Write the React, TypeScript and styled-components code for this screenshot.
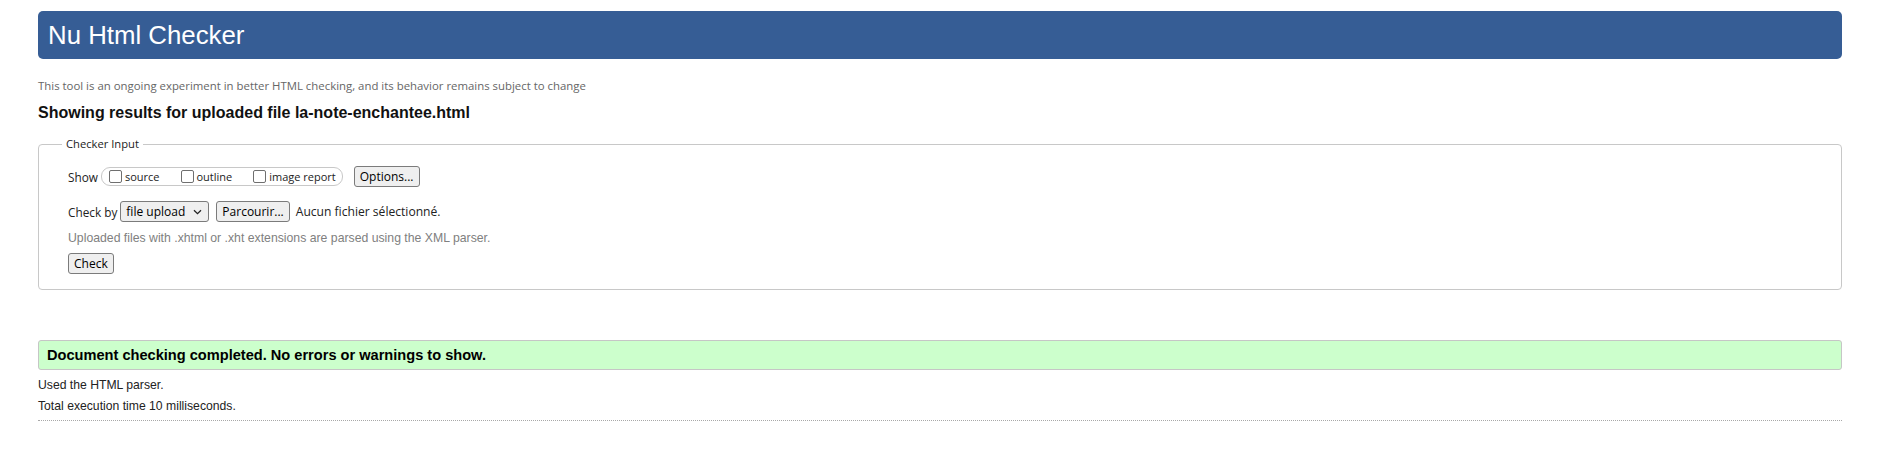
import React from "react";
import styled, { createGlobalStyle } from "styled-components";

const GlobalStyle = createGlobalStyle`
  body {
    margin: 0;
    background: #fff;
    color: #222;
    font-family: "Liberation Sans", Arial, sans-serif;
  }
`;

const uiFont = `"Open Sans", "Noto Sans", sans-serif`;
const arial = `"Liberation Sans", Arial, sans-serif`;

const App = function () {
  return (
    <>
      <GlobalStyle />
      <StyledPage>
        <StyledBanner>Nu Html Checker</StyledBanner>
        <StyledTagline>
          This tool is an ongoing experiment in better HTML checking, and its behavior remains subject to change
        </StyledTagline>
        <StyledResultTitle>Showing results for uploaded file la-note-enchantee.html</StyledResultTitle>

        <StyledFieldset>
          <StyledLegend>Checker Input</StyledLegend>
          <StyledRow>
            <StyledLabel>Show</StyledLabel>
            <StyledToggleGroup>
              <StyledToggle>
                <StyledTick />
                source
              </StyledToggle>
              <StyledToggle>
                <StyledTick />
                outline
              </StyledToggle>
              <StyledToggle>
                <StyledTick />
                image report
              </StyledToggle>
            </StyledToggleGroup>
            <StyledButton $gap={11}>Options...</StyledButton>
          </StyledRow>
          <StyledRow $top={14}>
            <StyledLabel>Check by</StyledLabel>
            <StyledSelect>
              file upload
              <svg width="9" height="6" viewBox="0 0 9 6">
                <path d="M1 1.2 L4.5 4.6 L8 1.2" fill="none" stroke="#222" strokeWidth="1.3" />
              </svg>
            </StyledSelect>
            <StyledButton $gap={7}>Parcourir...</StyledButton>
            <StyledFileName>Aucun fichier sélectionné.</StyledFileName>
          </StyledRow>
          <StyledHint>Uploaded files with .xhtml or .xht extensions are parsed using the XML parser.</StyledHint>
          <StyledRow $top={8}>
            <StyledButton>Check</StyledButton>
          </StyledRow>
        </StyledFieldset>

        <StyledSuccess>Document checking completed. No errors or warnings to show.</StyledSuccess>
        <StyledStats>
          <StyledStat>Used the HTML parser.</StyledStat>
          <StyledStat>Total execution time 10 milliseconds.</StyledStat>
        </StyledStats>
        <StyledRule />
      </StyledPage>
    </>
  );
};

export default App;

const StyledPage = styled.main`
  padding: 11px 36px 0 38px;
`;

const StyledBanner = styled.h1`
  margin: 0;
  height: 48px;
  padding-left: 10px;
  background: #365d95;
  border-radius: 5px;
  color: #fff;
  font: normal 25.8px/48px ${arial};
`;

const StyledTagline = styled.p`
  margin: 19px 0 0;
  color: #666;
  font: 11.4px/16px ${uiFont};
`;

const StyledResultTitle = styled.h2`
  margin: 10px 0 0;
  color: #111;
  font: bold 16px/18px ${arial};
`;

const StyledFieldset = styled.fieldset`
  margin: 14px 0 0;
  padding: 14px 28px 15px 29px;
  min-width: 0;
  border: 1px solid #c8c8c8;
  border-radius: 4px;
`;

const StyledLegend = styled.legend`
  margin-left: -6px;
  padding: 0 4px;
  color: #222;
  font: 11.2px/16px ${uiFont};
`;

const StyledRow = styled.div<{ $top?: number }>`
  display: flex;
  align-items: center;
  height: 21px;
  margin-top: ${(props) => props.$top ?? 0}px;
`;

const StyledLabel = styled.span`
  margin-right: 3px;
  color: #222;
  font: 11.8px/16px ${uiFont};
`;

const StyledToggleGroup = styled.div`
  display: flex;
  align-items: center;
  gap: 21px;
  height: 17px;
  padding: 0 6px 0 7px;
  border: 1px solid #c8c8c8;
  border-radius: 9px;
`;

const StyledToggle = styled.label`
  display: flex;
  align-items: center;
  gap: 3px;
  color: #222;
  font: 11px/16px ${uiFont};
`;

const StyledTick = styled.input.attrs({ type: "checkbox" })`
  appearance: none;
  box-sizing: border-box;
  width: 13px;
  height: 13px;
  margin: 0;
  background: #fff;
  border: 1.5px solid #6f6f6f;
  border-radius: 2px;
`;

const StyledButton = styled.button<{ $gap?: number }>`
  box-sizing: border-box;
  height: 21px;
  margin-left: ${(props) => props.$gap ?? 0}px;
  padding: 0 5px;
  background: #efefef;
  border: 1px solid #7b7b7b;
  border-radius: 3px;
  color: #000;
  font: 12px/19px ${uiFont};
`;

const StyledSelect = styled.span`
  box-sizing: border-box;
  display: flex;
  align-items: center;
  justify-content: space-between;
  width: 89px;
  height: 21px;
  padding: 0 6px 0 5px;
  background: #efefef;
  border: 1px solid #7b7b7b;
  border-radius: 3px;
  color: #000;
  font: 12px/19px ${uiFont};
`;

const StyledFileName = styled.span`
  margin-left: 6px;
  color: #222;
  font: 12.1px/16px ${uiFont};
`;

const StyledHint = styled.p`
  margin: 9px 0 0;
  color: #808080;
  font: 12.25px/14px ${arial};
`;

const StyledSuccess = styled.p`
  margin: 50px 0 0;
  height: 28px;
  padding: 0 8px;
  background: #ccffcc;
  border: 1px solid #c6c6c6;
  border-radius: 3px;
  color: #000;
  font: bold 14.6px/28px ${arial};
`;

const StyledStats = styled.div`
  margin-top: 5px;
`;

const StyledStat = styled.p`
  margin: 0;
  color: #222;
  font: 12.2px/21px ${arial};
`;

const StyledRule = styled.hr`
  margin: 3px 0 0;
  height: 0;
  border: 0;
  border-top: 1px dotted #a8a8a8;
`;
